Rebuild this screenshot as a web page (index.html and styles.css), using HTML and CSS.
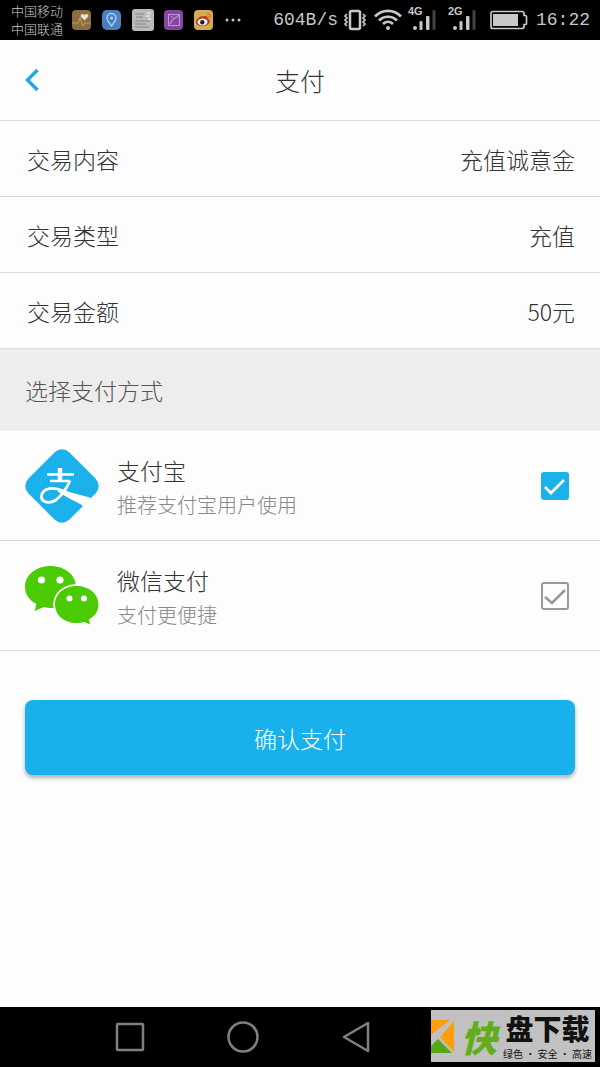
FILE: index.html
```html
<!DOCTYPE html>
<html lang="zh-CN">
<head>
<meta charset="utf-8">
<meta name="viewport" content="width=device-width, initial-scale=1">
<title>支付</title>
<link rel="stylesheet" href="styles.css">
</head>
<body>
<div class="status">
  <div class="carriers"><span>中国移动</span><span>中国联通</span></div>
  <div class="apps">
    <svg width="20" height="20" viewBox="0 0 20 20"><rect width="19" height="20" rx="4" fill="#8b6d3f"/><path d="M0 13h6l2-5 3 8 2-3h6" fill="none" stroke="#b8985c" stroke-width="1.2"/><path d="M12.500 10.500L8.800 6.800C7.500 4.500 11 2.500 12.500 5.200C14 2.500 17.500 4.500 16.200 6.800Z" fill="#e6dfd0"/></svg>
    <svg width="20" height="20" viewBox="0 0 20 20"><rect width="19" height="20" rx="5" fill="#4a80bd"/><path d="M9.500 16C7 12.500 5 10.500 5 8a4.500 4.500 0 0 1 9 0c0 2.500-2 4.500-4.500 8z" fill="none" stroke="#b5d2ee" stroke-width="1.300"/><circle cx="9.500" cy="8" r="1.500" fill="#b5d2ee"/></svg>
    <svg width="22" height="22" viewBox="0 0 22 22"><rect width="22" height="22" rx="3" fill="#b9bab9"/><path d="M3 5h9M4 8h7M3 12h15M3 15h11M3 18h14" stroke="#858685" stroke-width="1"/><path d="M15 4h4M14 7h4M16 10h3" stroke="#e4e4e4" stroke-width="1.500"/></svg>
    <svg width="20" height="20" viewBox="0 0 20 20"><rect width="19" height="20" rx="4" fill="#8446a0"/><path d="M4.500 4.500h11v11h-11zM6 14l3-5 4-2 2-2M7 7h2" fill="none" stroke="#c295d3" stroke-width="1.100"/></svg>
    <svg width="20" height="20" viewBox="0 0 20 20"><rect width="19" height="20" rx="4" fill="#d6ac51"/><path d="M2 12C2 9 7 5 9 6.500c3-1 5 0 4.500 2C19 11 14 16 8.500 16 5 16 2 14.500 2 12z" fill="#b93520"/><ellipse cx="8.500" cy="12" rx="5" ry="3.400" fill="#eee"/><circle cx="8.300" cy="12.200" r="2.200" fill="#222"/><path d="M12.500 3.500c3-.5 5 2 4 5M13 6c1.500-.2 2 .7 1.700 2" fill="none" stroke="#dd732b" stroke-width="1.200"/></svg>
    <svg width="18" height="20" viewBox="0 0 18 20" fill="#c4c4c4"><circle cx="3" cy="10" r="1.500"/><circle cx="9" cy="10" r="1.500"/><circle cx="15" cy="10" r="1.500"/></svg>
  </div>
  <div class="system">
    <span class="readout">604B/s</span>
    <svg width="24" height="22" viewBox="0 0 24 22" fill="none" stroke="#c8c8c8"><rect x="6" y="2" width="10" height="18" rx="1.500" stroke-width="2.500"/><path d="M3 5L1 7l2 2-2 2 2 2-2 2 2 2M19 5l2 2-2 2 2 2-2 2 2 2-2 2" stroke-width="1.700"/></svg>
    <svg width="28" height="22" viewBox="0 0 28 22" fill="none" stroke="#c8c8c8" stroke-width="2.700"><path d="M1 7.500C8 0 20 0 27 7.500M5 11.500c5-5 13-5 18 0M9 15c3-3 7-3 10 0"/><circle cx="14" cy="19" r="2" fill="#c8c8c8" stroke="none"/></svg>
    <div class="signal"><span class="net">4G</span><svg width="26" height="26" viewBox="0 0 26 26"><g fill="#c8c8c8"><circle cx="3" cy="21" r="2"/><rect x="7.500" y="14" width="3" height="9" rx="1"/><rect x="14" y="9" width="3.500" height="14" rx="1"/></g><rect x="20.500" y="3" width="3" height="20" rx="1" fill="#444"/></svg></div>
    <div class="signal"><span class="net">2G</span><svg width="26" height="26" viewBox="0 0 26 26"><g fill="#c8c8c8"><circle cx="3" cy="21" r="2"/><rect x="7.500" y="14" width="3" height="9" rx="1"/><rect x="14" y="9" width="3.500" height="14" rx="1"/></g><rect x="20.500" y="3" width="3" height="20" rx="1" fill="#444"/></svg></div>
    <svg class="battery" width="38" height="20" viewBox="0 0 38 20"><path d="M3 1.500h29q2 0 2 2v2h1.500q1 0 1 1v7q0 1-1 1H34v2q0 2-2 2H3q-2 0-2-2v-13q0-2 2-2z" fill="none" stroke="#c8c8c8" stroke-width="1.700"/><rect x="3" y="4" width="25" height="12" fill="#c8c8c8"/></svg>
    <time class="readout">16:22</time>
  </div>
</div>

<header class="header">
  <button class="back" type="button" aria-label="返回"><svg width="14" height="24" viewBox="0 0 14 24"><path d="M12.500 2L2.500 12l10 10" fill="none" stroke="#25a9dc" stroke-width="3.500"/></svg></button>
  <h1 class="title">支付</h1>
</header>

<main class="main">
  <dl class="details">
    <div class="row"><dt>交易内容</dt><dd>充值诚意金</dd></div>
    <div class="row"><dt>交易类型</dt><dd>充值</dd></div>
    <div class="row"><dt>交易金额</dt><dd>50元</dd></div>
  </dl>
  <h2 class="section">选择支付方式</h2>
  <label class="method">
    <svg class="logo" width="74" height="74" viewBox="0 0 74 74"><path d="M29.500 3.500Q37-3 44.500 3.500L70.500 29.500Q77 37 70.500 44.500L44.500 70.500Q37 77 29.500 70.500L3.500 44.500Q-3 37 3.500 29.500Z" fill="#1bb1ea"/><g fill="none" stroke="#fff"><path d="M35 19v13" stroke-width="4.500"/><path d="M22 25.500h27M25 32h20" stroke-width="2.400"/><path d="M45 31.500C42 39 37 46 31 51C25 55 16 54 16.500 47C18 38 29 38 38 42" stroke-width="2.800"/></g><path d="M32 38.500Q48 45 65 48.500L67 52L59 58L56 55.500Q45 50 33 43Z" fill="#fff"/></svg>
    <span class="text"><span class="name">支付宝</span><span class="note">推荐支付宝用户使用</span></span>
    <span class="tick"><input class="box" type="checkbox" checked><svg class="mark" viewBox="0 0 28 28"><path d="M4 15l6 6L23 8" fill="none" stroke="currentColor" stroke-width="2.700"/></svg></span>
  </label>
  <label class="method">
    <svg class="logo" width="74" height="60" viewBox="0 0 74 60"><g fill="#4acb04"><path d="M25.500 0C11 0 0 9 0 21C0 28 4 34 11.500 38L9.500 45L19 41Q22 42 26 42C40 42 51 33 51 21S40 0 25.500 0Z"/><path d="M51.500 20C39 20 30 28 30 38.500S39 57 51.500 57Q56 57 59.500 56L65 58.500L64 53.500C70 50 73.500 45 73.500 38.500C73.500 28 64 20 51.500 20Z" stroke="#fff" stroke-width="3.500" paint-order="stroke"/></g><g fill="#fff"><circle cx="16.500" cy="14" r="3.600"/><circle cx="35" cy="14" r="3.600"/><circle cx="44.500" cy="32.500" r="3"/><circle cx="59" cy="32.500" r="3"/></g></svg>
    <span class="text"><span class="name">微信支付</span><span class="note">支付更便捷</span></span>
    <span class="tick"><input class="box" type="checkbox"><svg class="mark" viewBox="0 0 28 28"><path d="M4 15l7 6L24 8" fill="none" stroke="currentColor" stroke-width="2.700"/></svg></span>
  </label>
  <button class="confirm" type="button">确认支付</button>
</main>

<nav class="nav">
  <button type="button" aria-label="最近任务"><svg width="32" height="32" viewBox="0 0 32 32"><rect x="3" y="3" width="26" height="26" rx="1"/></svg></button>
  <button type="button" aria-label="主页"><svg width="32" height="32" viewBox="0 0 32 32"><circle cx="16" cy="16" r="14.500"/></svg></button>
  <button type="button" aria-label="返回"><svg width="32" height="32" viewBox="0 0 32 32"><path d="M28 2v28L4 16Z" stroke-linejoin="round"/></svg></button>
  <div class="watermark">
    <svg width="24" height="52" viewBox="0 0 24 52"><path d="M0 10H19L0 25Z" fill="#ff9d0d"/><path d="M23 11V42L9 27Z" fill="#ff9d0d"/><path d="M7 29L21 43H0V36Z" fill="#57a618"/></svg>
    <span class="fast">快</span>
    <span class="brand"><span class="brand-name">盘下载</span><span class="slogan">绿色 · 安全 · 高速</span></span>
  </div>
</nav>
</body>
</html>
```
FILE: styles.css
```css
* { box-sizing: border-box; }
body {
  margin: 0;
  min-height: 100vh;
  display: flex;
  flex-direction: column;
  background: #fdfdfd;
  color: #333;
  font-family: "Noto Sans CJK SC", sans-serif;
  font-weight: 300;
  font-size: 23px;
}
button {
  border: 0;
  padding: 0;
  background: none;
  font: inherit;
}
svg { display: block; flex: none; }

.status {
  height: 40px;
  padding: 0 10px 0 11px;
  display: flex;
  align-items: center;
  background: #000;
  color: #c8c8c8;
}
.carriers {
  display: flex;
  flex-direction: column;
  font-size: 13px;
  line-height: 18px;
}
.apps {
  display: flex;
  align-items: center;
  gap: 10px;
  margin-left: 9px;
}
.system {
  display: flex;
  align-items: center;
  gap: 6px;
  margin-left: auto;
}
.readout {
  font-family: "Liberation Mono", monospace;
  font-size: 18px;
  line-height: 24px;
}
.signal { position: relative; width: 34px; padding-left: 4px; }
.net {
  position: absolute;
  left: 0;
  top: -2px;
  font: bold 11px/12px "Liberation Sans", sans-serif;
}
.battery { margin: 0 2px; }

.header {
  height: 81px;
  padding: 0 25px;
  display: grid;
  grid-template-columns: 1fr auto 1fr;
  align-items: center;
  border-bottom: 1px solid #dcdcdc;
}
.back { justify-self: start; }
.title {
  margin: 0;
  font-size: 25px;
  line-height: 36px;
  font-weight: 300;
}
.main { flex: 1; display: flex; flex-direction: column; }
.details { margin: 0; }
.row {
  height: 76px;
  padding: 0 25px 0 27px;
  display: flex;
  align-items: center;
  justify-content: space-between;
  border-bottom: 1px solid #dcdcdc;
}
.row dd { margin: 0; }
.section {
  margin: 0;
  padding: 24px 25px;
  background: #ededed;
  color: #555;
  font-size: 23px;
  line-height: 34px;
  font-weight: 300;
}
.method {
  height: 110px;
  padding: 0 31px 0 25px;
  display: flex;
  align-items: center;
  gap: 18px;
  border-bottom: 1px solid #dcdcdc;
}
.text { flex: 1; display: flex; flex-direction: column; padding-top: 2px; }
.name { line-height: 36px; }
.note { font-size: 20px; line-height: 34px; color: #888; }
.tick { position: relative; width: 28px; height: 28px; color: #999; }
.box {
  appearance: none;
  display: block;
  width: 100%;
  height: 100%;
  margin: 0;
  border: 2px solid #999;
  border-radius: 3px;
}
.box:checked { background: #1bb1ea; border-color: #1bb1ea; }
.mark { position: absolute; inset: 0; pointer-events: none; }
.box:checked + .mark { color: #fff; }
.confirm {
  margin: 49px 25px;
  height: 75px;
  border-radius: 8px;
  background: #19b1eb;
  color: #fff;
  box-shadow: 0 3px 4px rgba(0, 0, 0, 0.3);
}

.nav {
  position: relative;
  height: 60px;
  padding: 0 19%;
  display: flex;
  align-items: center;
  gap: 81px;
  background: #000;
}
.nav button svg { fill: none; stroke: #808080; stroke-width: 2.5; }
.watermark {
  position: absolute;
  right: 5px;
  bottom: 5px;
  height: 52px;
  display: flex;
  align-items: center;
  padding-right: 3px;
  background: #c1c1c1;
  color: #111;
}
.fast {
  margin: 0 6px;
  color: #62ad18;
  font-size: 36px;
  line-height: 48px;
  font-weight: 900;
  font-style: italic;
}
.brand { display: flex; flex-direction: column; align-items: center; }
.brand-name { font-size: 28px; line-height: 34px; font-weight: 900; }
.slogan { font-size: 10px; line-height: 14px; font-weight: 400; }
.brand-name + .slogan { margin-top: 2px; }
```
